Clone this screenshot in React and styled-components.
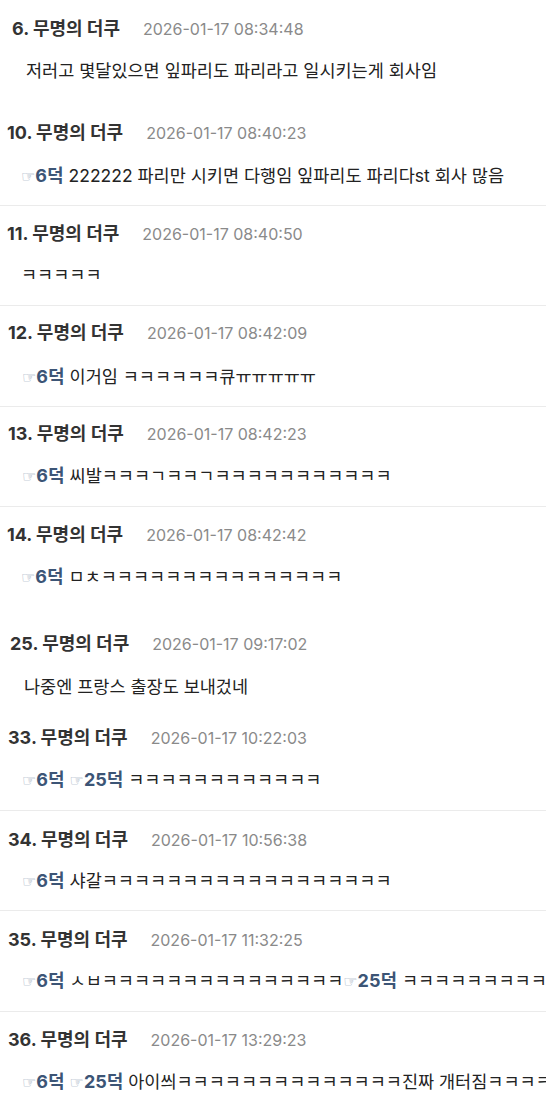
import React from "react";
import styled, { createGlobalStyle } from "styled-components";

const Global = createGlobalStyle`
  html, body { margin: 0; padding: 0; background: #ffffff; }
  body {
    font-family: Inter, "Noto Sans CJK KR", "Noto Sans", sans-serif;
    -webkit-font-smoothing: antialiased;
  }
`;

const List = styled.main`
  display: flex;
  flex-direction: column;
  width: 546px;
  overflow: hidden;
`;

const Item = styled.article`
  display: flex;
  flex-direction: column;
  gap: ${(p) => p.$gap}px;
  padding: ${(p) => p.$pt}px 0 ${(p) => p.$pb}px ${(p) => p.$indent}px;
  border-bottom: ${(p) => (p.$divider ? "1px solid #ebebeb" : "0")};
`;

const Header = styled.header`
  display: flex;
  align-items: baseline;
  gap: 23px;
  height: 24px;
  line-height: 24px;
  white-space: nowrap;
`;

const Name = styled.span`
  font-size: 18px;
  font-weight: 700;
  color: #333333;
`;

const Time = styled.time`
  font-size: 16px;
  color: #8a8a8a;
`;

const Body = styled.p`
  margin: 0;
  padding-left: 14px;
  height: 24px;
  line-height: 24px;
  font-size: 17.5px;
  color: #222222;
  white-space: nowrap;
  overflow: hidden;
`;

const Anchor = styled.a`
  color: #3c5576;
  font-weight: 700;
  font-size: 18px;
  text-decoration: none;
`;

const Pointer = styled.span`
  font-family: "DejaVu Sans", sans-serif;
  font-size: 16px;
  font-weight: 400;
  color: #8c9cb2;
`;

const Ref = ({ n }) => (
  <Anchor href="#">
    <Pointer>☞</Pointer>
    {n}덕
  </Anchor>
);

const k = (n) => "ㅋ".repeat(n);

const items = [
  { no: 6, time: "2026-01-17 08:34:48", indent: 12, pt: 17, gap: 18, pb: 21, divider: false,
    body: ["저러고 몇달있으면 잎파리도 파리라고 일시키는게 회사임"] },
  { no: 10, time: "2026-01-17 08:40:23", indent: 7, pt: 17, gap: 19, pb: 17, divider: true,
    body: [6, " 222222 파리만 시키면 다행임 잎파리도 파리다st 회사 많음"] },
  { no: 11, time: "2026-01-17 08:40:50", indent: 7, pt: 16, gap: 17, pb: 18, divider: true,
    body: [k(5)] },
  { no: 12, time: "2026-01-17 08:42:09", indent: 8, pt: 15, gap: 20, pb: 17, divider: true,
    body: [6, " 이거임 " + k(6) + "큐" + "ㅠ".repeat(5)] },
  { no: 13, time: "2026-01-17 08:42:23", indent: 8, pt: 15, gap: 18, pb: 18, divider: true,
    body: [6, " 씨발ㅋㅋㅋㄱㅋㅋㄱ" + k(11)] },
  { no: 14, time: "2026-01-17 08:42:42", indent: 7, pt: 16, gap: 18, pb: 26, divider: false,
    body: [6, " ㅁㅊ" + k(15)] },
  { no: 25, time: "2026-01-17 09:17:02", indent: 10, pt: 17, gap: 19, pb: 10, divider: false,
    body: ["나중엔 프랑스 출장도 보내겄네"] },
  { no: 33, time: "2026-01-17 10:22:03", indent: 8, pt: 17, gap: 18, pb: 18, divider: true,
    body: [6, " ", 25, " " + k(12)] },
  { no: 34, time: "2026-01-17 10:56:38", indent: 8, pt: 17, gap: 17, pb: 17, divider: true,
    body: [6, " 샤갈" + k(18)] },
  { no: 35, time: "2026-01-17 11:32:25", indent: 8, pt: 17, gap: 17, pb: 18, divider: true,
    body: [6, " ㅅㅂ" + k(15), 25, " " + k(12)] },
  { no: 36, time: "2026-01-17 13:29:23", indent: 8, pt: 16, gap: 18, pb: 10, divider: false,
    body: [6, " ", 25, " 아이씌" + k(14) + "진짜 개터짐" + k(6)] },
];

export default function App() {
  return (
    <>
      <Global />
      <List>
        {items.map((it) => (
          <Item
            key={it.no}
            $indent={it.indent}
            $pt={it.pt}
            $pb={it.pb}
            $gap={it.gap}
            $divider={it.divider}
          >
            <Header>
              <Name>{it.no}. 무명의 더쿠</Name>
              <Time>{it.time}</Time>
            </Header>
            <Body>
              {it.body.map((part, i) =>
                typeof part === "number" ? <Ref key={i} n={part} /> : <React.Fragment key={i}>{part}</React.Fragment>
              )}
            </Body>
          </Item>
        ))}
      </List>
    </>
  );
}
